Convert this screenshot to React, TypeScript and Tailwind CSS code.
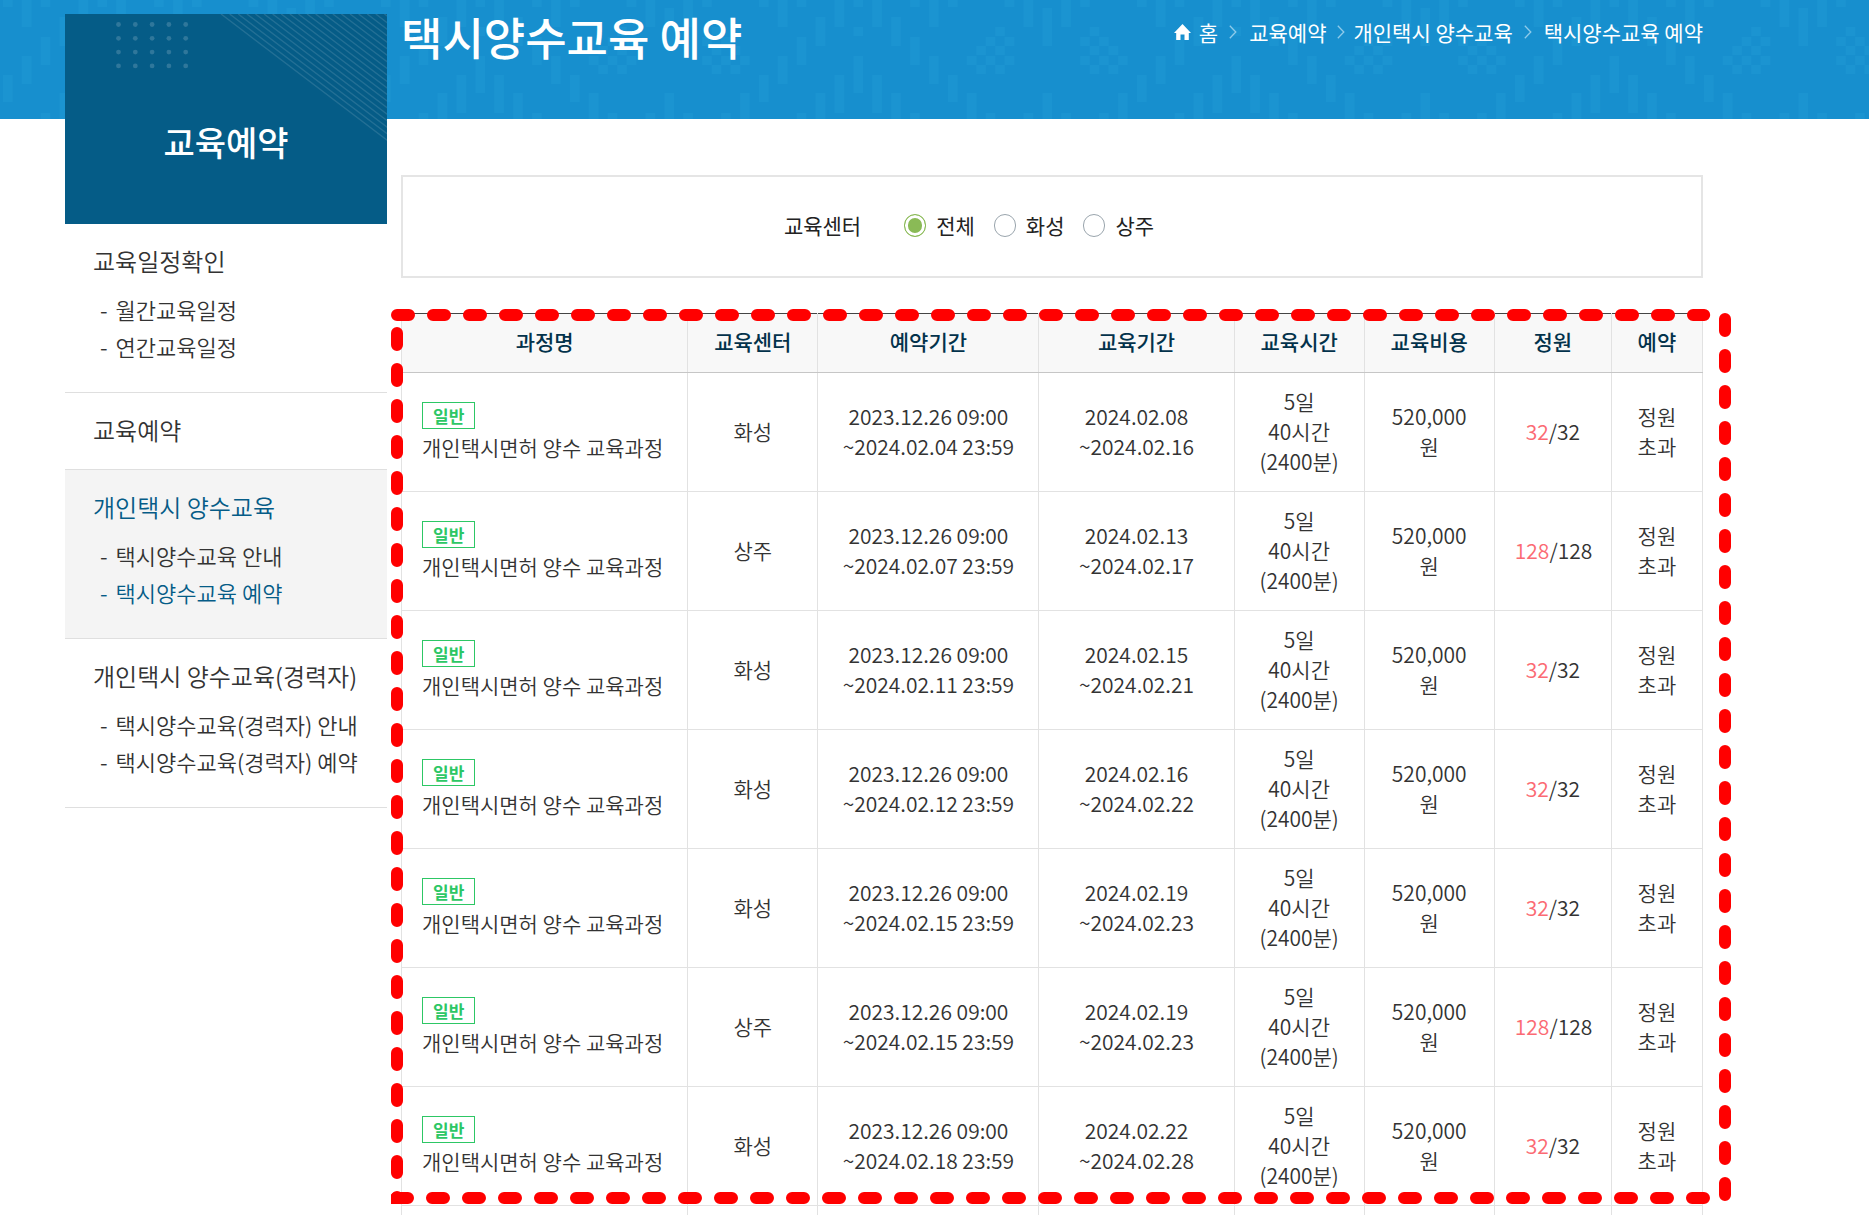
import { Fragment, useState } from 'react';
import clsx from 'clsx';

interface MenuSection {
    title: string;
    items: string[];
    active?: boolean;
    activeItem?: string;
}

interface Course {
    center: string;
    bookingEnd: string;
    start: string;
    end: string;
    seats: number;
}

const MENU: MenuSection[] = [
    { title: '교육일정확인', items: ['월간교육일정', '연간교육일정'] },
    { title: '교육예약', items: [] },
    {
        title: '개인택시 양수교육',
        items: ['택시양수교육 안내', '택시양수교육 예약'],
        active: true,
        activeItem: '택시양수교육 예약',
    },
    { title: '개인택시 양수교육(경력자)', items: ['택시양수교육(경력자) 안내', '택시양수교육(경력자) 예약'] },
];

const CENTERS = ['전체', '화성', '상주'];

const COLUMNS = [
    { label: '과정명', width: 'w-[22%]' },
    { label: '교육센터', width: 'w-[10%]' },
    { label: '예약기간', width: 'w-[17%]' },
    { label: '교육기간', width: 'w-[15%]' },
    { label: '교육시간', width: 'w-[10%]' },
    { label: '교육비용', width: 'w-[10%]' },
    { label: '정원', width: 'w-[9%]' },
    { label: '예약', width: 'w-[7%]' },
];

const COURSES: Course[] = [
    { center: '화성', bookingEnd: '2024.02.04', start: '2024.02.08', end: '2024.02.16', seats: 32 },
    { center: '상주', bookingEnd: '2024.02.07', start: '2024.02.13', end: '2024.02.17', seats: 128 },
    { center: '화성', bookingEnd: '2024.02.11', start: '2024.02.15', end: '2024.02.21', seats: 32 },
    { center: '화성', bookingEnd: '2024.02.12', start: '2024.02.16', end: '2024.02.22', seats: 32 },
    { center: '화성', bookingEnd: '2024.02.15', start: '2024.02.19', end: '2024.02.23', seats: 32 },
    { center: '상주', bookingEnd: '2024.02.15', start: '2024.02.19', end: '2024.02.23', seats: 128 },
    { center: '화성', bookingEnd: '2024.02.18', start: '2024.02.22', end: '2024.02.28', seats: 32 },
];

// [column, top, height] of the bars in one repeat of the banner
const BARS = [
    [0, 0, 7], [0, 75, 27], [2, 0, 27], [2, 56, 28], [4, 0, 7], [4, 37, 28], [4, 113, 6],
    [6, 17, 29], [6, 93, 26], [8, 0, 27], [8, 75, 38], [10, 0, 7], [10, 27, 9], [10, 56, 37],
    [12, 0, 27], [12, 75, 38], [14, 17, 29], [14, 93, 26], [16, 0, 7], [16, 37, 28], [16, 113, 6],
    [18, 0, 27], [18, 56, 28], [20, 0, 7], [20, 75, 27], [22, 93, 26], [24, 113, 6], [26, 0, 7],
    [28, 0, 27], [28, 113, 6], [30, 8, 38], [30, 93, 26], [32, 0, 27], [32, 113, 6], [34, 0, 7],
    [36, 113, 6], [38, 93, 26],
    [25, 27, 9], [24, 37, 9], [26, 37, 9], [23, 46, 9], [25, 46, 9], [22, 56, 9], [24, 56, 9],
    [26, 56, 9], [23, 65, 9], [25, 65, 9],
    [35, 27, 9], [34, 37, 9], [36, 37, 9], [35, 46, 9], [37, 46, 9], [34, 56, 9], [36, 56, 9],
    [38, 56, 9], [35, 65, 9], [37, 65, 9],
];

function BannerPattern() {
    return (
        <svg className="absolute inset-0 h-full w-full" aria-hidden="true">
            <defs>
                <pattern id="bars" x="3" y="0" width="378" height="119" patternUnits="userSpaceOnUse">
                    {BARS.map(([col, top, height]) => (
                        <rect key={`${col}-${top}`} x={col * 9.45} y={top} width="9.45" height={height} fill="#1b94d1" />
                    ))}
                </pattern>
            </defs>
            <rect width="100%" height="100%" fill="url(#bars)" />
        </svg>
    );
}

function MenuTitleArt() {
    return (
        <svg className="absolute inset-0 h-full w-full" aria-hidden="true">
            {[0, 1, 2, 3].map((row) =>
                [0, 1, 2, 3, 4].map((col) => (
                    <circle key={`${row}-${col}`} cx={53.5 + col * 16.8} cy={10.5 + row * 13.8} r="2.4" fill="#fff" fillOpacity="0.17" />
                ))
            )}
            {Array.from({ length: 20 }, (_, i) => (
                <line
                    key={i}
                    x1={156 + i * 8.6}
                    y1="0"
                    x2={156 + i * 8.6 + 171}
                    y2="130"
                    stroke="#fff"
                    strokeOpacity="0.12"
                    strokeWidth="1.4"
                />
            ))}
        </svg>
    );
}

function HomeIcon() {
    return (
        <svg className="h-4 w-[17px]" viewBox="0 0 17 16" fill="currentColor" aria-hidden="true">
            <path d="M8.500 0 17 9h-2.200v7h-4.300v-5.500h-4V16H2.200V9H0z" />
        </svg>
    );
}

function Chevron() {
    return (
        <svg className="h-3.5 w-2 text-[#8fcbea]" viewBox="0 0 8 14" fill="none" stroke="currentColor" aria-hidden="true">
            <path d="M.8.800 6.800 7l-6 6.200" strokeWidth="1.300" />
        </svg>
    );
}

function Breadcrumb() {
    return (
        <nav aria-label="breadcrumb" className="flex items-center text-[21px] leading-[30px]">
            <a href="#home" className="flex items-center gap-2">
                <HomeIcon />홈
            </a>
            <span className="pr-3 pl-[11px]"><Chevron /></span>
            <a href="#booking">교육예약</a>
            <span className="pr-2 pl-[11px]"><Chevron /></span>
            <a href="#transfer">개인택시 양수교육</a>
            <span className="pr-3 pl-[11px]"><Chevron /></span>
            <a href="#transfer-booking">택시양수교육 예약</a>
        </nav>
    );
}

function SideMenu() {
    return (
        <aside className="w-[322px] shrink-0">
            <div className="relative flex h-[210px] items-center justify-center overflow-hidden bg-[#055c87] pt-[46px]">
                <MenuTitleArt />
                <h2 className="relative text-[34px] leading-[50px] font-medium text-white">교육예약</h2>
            </div>
            <ul>
                {MENU.map((section) => (
                    <li
                        key={section.title}
                        className={clsx('border-b border-[#dfdfdf] px-7', section.active && 'bg-[#f4f4f4]')}
                    >
                        <a
                            href="#menu"
                            className={clsx(
                                'block pt-[19px] pb-[21px] text-2xl leading-9 font-[350] whitespace-nowrap',
                                section.active ? 'text-[#055c87]' : 'text-[#333]'
                            )}
                        >
                            {section.title}
                        </a>
                        {section.items.length > 0 && (
                            <ul className="-mt-[9px] pb-[27px]">
                                {section.items.map((item) => (
                                    <li key={item}>
                                        <a
                                            href="#menu"
                                            className={clsx(
                                                'flex gap-2 pl-[7px] text-[22px] leading-[37px] font-[350] whitespace-nowrap',
                                                item === section.activeItem ? 'text-[#055c87]' : 'text-[#333]'
                                            )}
                                        >
                                            <span>-</span>
                                            {item}
                                        </a>
                                    </li>
                                ))}
                            </ul>
                        )}
                    </li>
                ))}
            </ul>
        </aside>
    );
}

function CenterFilter() {
    const [center, setCenter] = useState('전체');

    return (
        <fieldset className="flex h-[103px] items-center justify-center gap-[43px] border-2 border-[#e5e5e5] pr-[166px] pb-[3px] text-[21px] leading-[30px] text-[#222]">
            <span id="center-label">교육센터</span>
            <div role="radiogroup" aria-labelledby="center-label" className="flex gap-[19px]">
                {CENTERS.map((name) => (
                    <label key={name} className="flex items-center gap-2.5">
                        <input
                            type="radio"
                            name="center"
                            checked={center === name}
                            onChange={() => setCenter(name)}
                            className="h-[23px] w-[22px] appearance-none rounded-full border border-[#9aa5ad] bg-white checked:border-[#8aba56] checked:bg-[#8aba56] checked:shadow-[inset_0_0_0_3px_#fff]"
                        />
                        {name}
                    </label>
                ))}
            </div>
        </fieldset>
    );
}

function CourseRow({ course }: { course: Course }) {
    const border = 'border border-[#e2e2e2]';
    const cell = clsx(border, 'px-5 pt-[13px] pb-[15px]');

    return (
        <tr>
            <td className={clsx(border, 'px-5 py-3.5 text-left whitespace-nowrap')}>
                <span className="mb-[3px] block w-fit border border-[#2dc765] px-2.5 text-[17px] leading-[25px] font-bold text-[#2dc765]">
                    일반
                </span>
                개인택시면허 양수 교육과정
            </td>
            <td className={cell}>{course.center}</td>
            <td className={cell}>
                2023.12.26 09:00
                <br />~{course.bookingEnd} 23:59
            </td>
            <td className={cell}>
                {course.start}
                <br />~{course.end}
            </td>
            <td className={cell}>
                {['5일', '40시간', '(2400분)'].map((line, i) => (
                    <Fragment key={line}>
                        {i > 0 && <br />}
                        {line}
                    </Fragment>
                ))}
            </td>
            <td className={cell}>520,000원</td>
            <td className={cell}>
                <span className="text-[#fb6a73]">{course.seats}</span>/{course.seats}
            </td>
            <td className={cell}>정원초과</td>
        </tr>
    );
}

function HighlightFrame() {
    return (
        <svg
            className="pointer-events-none absolute -top-1 -left-2.5 h-[895px] w-[calc(100%+38px)]"
            stroke="#f00"
            strokeWidth="12"
            strokeLinecap="round"
            strokeDasharray="12 24"
            aria-hidden="true"
        >
            <line x1="6" y1="6" x2="98%" y2="6" />
            <line x1="5" y1="889" x2="98%" y2="889" />
            <line x1="6" y1="24" x2="6" y2="895" />
            <line x1="100%" y1="10" x2="100%" y2="886" transform="translate(-6 0)" />
        </svg>
    );
}

export default function App() {
    return (
        <div className="relative h-screen overflow-hidden bg-white font-['Noto_Sans_CJK_KR',sans-serif] text-[#333]">
            <div className="absolute inset-x-0 top-0 h-[119px] bg-[#178fce]">
                <BannerPattern />
            </div>

            <div className="relative flex gap-3.5 pt-3.5 pr-[166px] pl-[65px]">
                <SideMenu />

                <main className="min-w-0 grow">
                    <header className="flex h-[161px] items-start justify-between text-white">
                        <h1 className="text-[45px] leading-[46px] font-medium">택시양수교육 예약</h1>
                        <div className="pt-[3px]">
                            <Breadcrumb />
                        </div>
                    </header>

                    <CenterFilter />

                    <div className="relative mt-[35px]">
                        <table className="w-full table-fixed border-collapse text-center text-[21px] leading-[30px] font-[350]">
                            <thead>
                                <tr className="bg-[#f8f8f8] text-[#03324b]">
                                    {COLUMNS.map((col) => (
                                        <th
                                            key={col.label}
                                            className={clsx(
                                                'border border-t-[#444] border-r-[#e2e2e2] border-b-[#c6c6c6] border-l-[#e2e2e2] pt-3 pb-4 font-medium',
                                                col.width
                                            )}
                                        >
                                            {col.label}
                                        </th>
                                    ))}
                                </tr>
                            </thead>
                            <tbody>
                                {COURSES.map((course) => (
                                    <CourseRow key={course.bookingEnd + course.center} course={course} />
                                ))}
                                <tr className="h-[119px]">
                                    {COLUMNS.map((col) => (
                                        <td key={col.label} className="border border-[#e2e2e2]" />
                                    ))}
                                </tr>
                            </tbody>
                        </table>
                        <HighlightFrame />
                    </div>
                </main>
            </div>
        </div>
    );
}
